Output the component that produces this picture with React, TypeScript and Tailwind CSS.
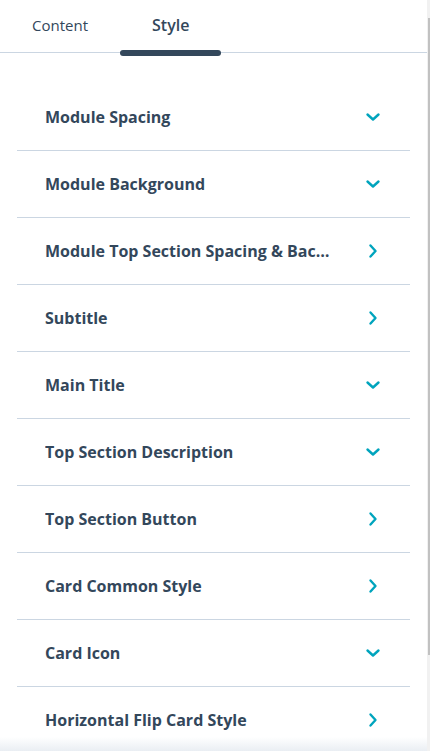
import { useState } from 'react';

const sections = [
  { id: 1, label: 'Module Spacing', open: true },
  { id: 2, label: 'Module Background', open: true },
  { id: 3, label: 'Module Top Section Spacing & Background', open: false },
  { id: 4, label: 'Subtitle', open: false },
  { id: 5, label: 'Main Title', open: true },
  { id: 6, label: 'Top Section Description', open: true },
  { id: 7, label: 'Top Section Button', open: false },
  { id: 8, label: 'Card Common Style', open: false },
  { id: 9, label: 'Card Icon', open: true },
  { id: 10, label: 'Horizontal Flip Card Style', open: false },
];

const Chevron = ({ down }: { down: boolean }) => (
  <svg width="16" height="16" viewBox="0 0 16 16" fill="none" className="shrink-0">
    {down ? (
      <path d="M2.5 5.5 L8 10.5 L13.5 5.5" stroke="#00a4bd" strokeWidth="2.4" strokeLinecap="round" strokeLinejoin="round" />
    ) : (
      <path d="M5.5 2.5 L10.5 8 L5.5 13.5" stroke="#00a4bd" strokeWidth="2.4" strokeLinecap="round" strokeLinejoin="round" />
    )}
  </svg>
);

const App = () => {
  const [tab, setTab] = useState('style');

  return (
    <div className="relative flex h-[751px] w-[430px] overflow-hidden bg-white text-[#33475b]" style={{ fontFamily: '"Open Sans", "Liberation Sans", sans-serif' }}>
      <div className="flex w-[427px] flex-col">
        <div className="flex h-[53px] shrink-0 border-b border-[#cbd6e2]">
          <button
            onClick={() => setTab('content')}
            className={`relative px-8 pb-[2px] ${tab === 'content' ? 'text-[16px] font-semibold' : 'text-[15px] font-normal'}`}
          >
            Content
            {tab === 'content' && <span className="absolute bottom-[-3px] left-0 right-0 h-[6px] rounded-full bg-[#33475b]" />}
          </button>
          <button
            onClick={() => setTab('style')}
            className={`relative px-8 pb-[2px] ${tab === 'style' ? 'text-[16px] font-semibold' : 'text-[15px] font-normal'}`}
          >
            Style
            {tab === 'style' && <span className="absolute bottom-[-4px] left-0 right-0 h-[6px] rounded-full bg-[#33475b]" />}
          </button>
        </div>

        <div className="mx-[17px] mt-[31px] flex shrink-0 flex-col">
          {sections.map((s) => (
            <div key={s.id} className="flex h-[67px] items-center border-b border-[#cbd6e2] pl-7 pr-[29px]">
              <span className="mr-[33px] min-w-0 flex-1 truncate text-[16px] font-bold">{s.label}</span>
              <Chevron down={s.open} />
            </div>
          ))}
        </div>
      </div>

      <div className="flex w-[3px] flex-col bg-[#f1f1f1]">
        <div className="mt-[18px] h-[637px] w-[2px] self-end bg-[#c1c1c1]" />
      </div>

      <div className="pointer-events-none absolute bottom-0 left-0 right-[3px] h-[14px] bg-gradient-to-b from-transparent to-[#eaeef3]" />
    </div>
  );
};

export default App;
